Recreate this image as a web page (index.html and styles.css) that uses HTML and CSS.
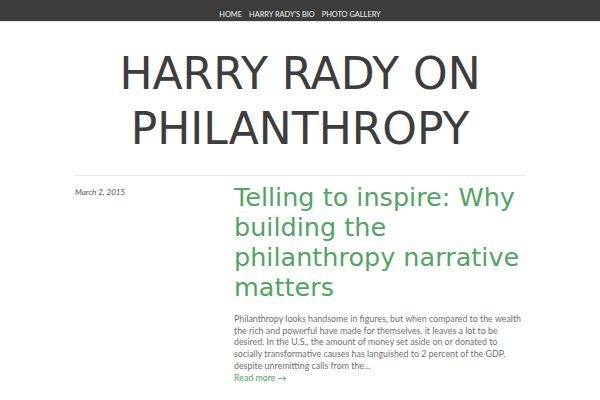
FILE: index.html
```html
<!DOCTYPE html>
<html>
<head>
<meta charset="utf-8">
<link rel="stylesheet" href="styles.css">
</head>
<body>
<nav class="topbar">
  <ul class="menu">
    <li><a href="#">Home</a></li>
    <li><a href="#">Harry Rady’s Bio</a></li>
    <li><a href="#">Photo Gallery</a></li>
  </ul>
</nav>
<header class="site-header">
  <h1 class="site-title">HARRY RADY ON PHILANTHROPY</h1>
</header>
<main class="content">
  <article class="post">
    <div class="post-meta">March 2, 2015</div>
    <div class="post-body">
      <h2 class="post-title"><a href="#">Telling to inspire: Why building the philanthropy narrative matters</a></h2>
      <p class="excerpt">Philanthropy looks handsome in figures, but when compared to the wealth the rich and powerful have made for themselves, it leaves a lot to be desired. In the U.S., the amount of money set aside on or donated to socially transformative causes has languished to 2 percent of the GDP, despite unremitting calls from the…</p>
      <a class="more" href="#">Read more →</a>
    </div>
  </article>
</main>
</body>
</html>
```
FILE: styles.css
```css
* { box-sizing: border-box; }
html, body { margin: 0; padding: 0; }
body {
  font-family: Lato, "Open Sans", sans-serif;
  background: #ffffff;
  color: #666;
}
a { text-decoration: none; }
.topbar {
  background: #3d3d3d;
  height: 22px;
  border-bottom: 1px solid #e4e4e4;
}
.menu {
  list-style: none;
  margin: 0;
  padding: 0;
  display: flex;
  justify-content: center;
  gap: 7px;
  height: 21px;
  align-items: center;
}
.menu a {
  color: #f2f2f2;
  font-size: 7.4px;
  text-transform: uppercase;
}
.site-header {
  width: 450px;
  margin: 0 auto;
  padding: 24px 0 19px;
  border-bottom: 1px solid #e8e8e8;
}
.site-title {
  margin: 0;
  text-align: center;
  font-family: "DejaVu Sans", sans-serif;
  font-weight: normal;
  font-size: 44px;
  line-height: 55px;
  color: #3d3d3d;
}
.content {
  width: 450px;
  margin: 0 auto;
}
.post {
  display: flex;
  padding-top: 6px;
}
.post-meta {
  width: 159px;
  flex: none;
  font-size: 8px;
  font-style: italic;
  color: #555;
  padding-top: 5px;
}
.post-body { flex: 1; }
.post-title {
  margin: 0 0 11px;
  font-family: "DejaVu Sans", sans-serif;
  font-weight: normal;
  font-size: 25.5px;
  line-height: 30px;
}
.post-title a { color: #52a464; }
.excerpt {
  margin: 0;
  font-size: 8.85px;
  line-height: 11.7px;
  color: #707070;
}
.more {
  display: block;
  font-size: 8.85px;
  line-height: 11.7px;
  color: #52a464;
}
```
